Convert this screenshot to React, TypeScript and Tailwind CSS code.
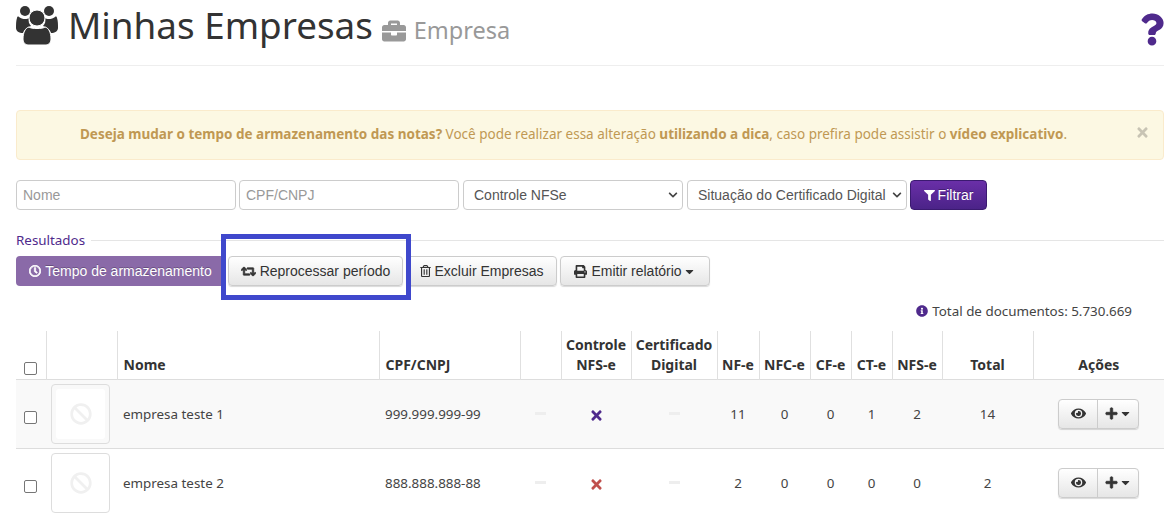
import { FaBriefcase, FaEye, FaPlus, FaPrint, FaQuestion, FaRetweet, FaTimes, FaFilter, FaInfoCircle, FaBan, FaRegClock, FaCaretDown, FaRegTrashAlt, FaChevronDown } from "react-icons/fa";

const noto = "font-['Noto_Sans',sans-serif]";
const arial = "font-['Liberation_Sans',Arial,sans-serif]";

const UsersIcon = () => (
    <svg viewBox="0 0 42 40" className="w-[42px] h-[40px] fill-[#333333]">
        <circle cx="9" cy="6" r="5" />
        <circle cx="33" cy="6" r="5" />
        <path d="M1 13c0-1 1-2 2-1 2 2 8 3 10 1-1 3 0 6 2 8-4 1-7 4-8 7-4 0-7-2-7-5 0-4 0-7 1-10z" />
        <path d="M41 13c0-1-1-2-2-1-2 2-8 3-10 1 1 3 0 6-2 8 4 1 7 4 8 7 4 0 7-2 7-5 0-4 0-7-1-10z" />
        <circle cx="21" cy="13" r="8" stroke="#ffffff" strokeWidth="1" />
        <path d="M13 22c2 2 14 2 16 0 4 1 6 6 6 12 0 3-2 6-5 6H12c-3 0-5-3-5-6 0-6 2-11 6-12z" stroke="#ffffff" strokeWidth="1" />
    </svg>
);

const headers = [
    { label: "", w: "w-[30px]" },
    { label: "", w: "w-[71px]" },
    { label: "Nome", w: "w-[262px]", left: true },
    { label: "CPF/CNPJ", w: "w-[141px]", left: true },
    { label: "", w: "w-[41px]" },
    { label: "Controle NFS-e", w: "w-[70px]" },
    { label: "Certificado Digital", w: "w-[86px]" },
    { label: "NF-e", w: "w-[42px]" },
    { label: "NFC-e", w: "w-[51px]" },
    { label: "CF-e", w: "w-[41px]" },
    { label: "CT-e", w: "w-[41px]" },
    { label: "NFS-e", w: "w-[50px]" },
    { label: "Total", w: "w-[91px]" },
    { label: "Ações", w: "w-[131px]" },
];

const rows = [
    { nome: "empresa teste 1", cnpj: "999.999.999-99", x: "text-[#4f2a8c]", vals: ["11", "0", "0", "1", "2", "14"], bg: "bg-[#f9f9f9]" },
    { nome: "empresa teste 2", cnpj: "888.888.888-88", x: "text-[#c0504d]", vals: ["2", "0", "0", "0", "0", "2"], bg: "bg-white" },
];

const btn =
    "h-[30px] flex items-center justify-center gap-1 whitespace-nowrap rounded-[4px] border border-[#cccccc] shadow-[0_1px_1px_rgba(0,0,0,0.15)] bg-gradient-to-b from-white to-[#e6e6e6] text-[14px] text-[#333333]";

const Dash = () => <div className="mx-auto w-[11px] h-[3px] bg-[#eeeeee]" />;

const Check = () => (
    <div className="ml-[8px] w-[13px] h-[13px] rounded-[2px] border border-[#767676] bg-white" />
);

export default function App() {
    return (
        <div className={`${noto} w-[1167px] h-[516px] overflow-hidden bg-white pl-4 pr-[3px] text-[#333333]`}>
            {/* titulo */}
            <div className="h-[66px] border-b border-[#eeeeee] flex items-start">
                <div className="mt-[5px]"><UsersIcon /></div>
                <h1 className="ml-[10px] text-[36.8px] leading-[50px] text-[#333333] whitespace-nowrap">Minhas Empresas</h1>
                <div className="ml-[8px] mt-[14px] flex items-center gap-[7px] text-[#999999] text-[23.5px] leading-[33px]">
                    <FaBriefcase className="w-[26px] h-[24px]" />
                    <span>Empresa</span>
                </div>
                <FaQuestion className="ml-auto mt-[13px] w-[24px] h-[33px] text-[#4f2a8c]" />
            </div>

            {/* alerta */}
            <div className="relative mt-[44px] h-[50px] rounded-[4px] border border-[#faebcc] bg-[#fcf8e3] flex items-center justify-center pr-[33px] pb-[1px] text-[13.5px] text-[#c09853]">
                <p>
                    <b>Deseja mudar o tempo de armazenamento das notas?</b> Você pode realizar essa alteração <b>utilizando a dica</b>, caso prefira pode assistir o <b>vídeo explicativo</b>.
                </p>
                <FaTimes className="absolute right-[13px] top-[14px] w-[15px] h-[15px] text-[#c8c4b4]" />
            </div>

            {/* filtros */}
            <div className={`${arial} mt-[20px] flex items-center gap-[3px] text-[14px]`}>
                <div className="w-[220px] h-[30px] rounded-[4px] border border-[#cccccc] px-[6px] leading-[28px] text-[#999999]">Nome</div>
                <div className="w-[220px] h-[30px] rounded-[4px] border border-[#cccccc] px-[6px] leading-[28px] text-[#999999]">CPF/CNPJ</div>
                <div className="ml-[1px] w-[220px] h-[30px] rounded-[4px] border border-[#cccccc] pl-[10px] pr-[4px] flex items-center justify-between text-[#555555]">
                    <span>Controle NFSe</span>
                    <FaChevronDown className="w-[10px] h-[10px] text-[#444444]" />
                </div>
                <div className="ml-[1px] w-[220px] h-[30px] rounded-[4px] border border-[#cccccc] pl-[10px] pr-[4px] flex items-center justify-between text-[#555555]">
                    <span className="whitespace-nowrap">Situação do Certificado Digital</span>
                    <FaChevronDown className="w-[10px] h-[10px] text-[#444444]" />
                </div>
                <div className="w-[77px] h-[30px] rounded-[4px] border border-[#3b1a70] bg-gradient-to-b from-[#6a2fa8] to-[#4b2388] text-white [text-shadow:0_-1px_0_rgba(0,0,0,0.3)] flex items-center justify-center gap-[3px]">
                    <FaFilter className="w-[11px] h-[11px]" />
                    <span>Filtrar</span>
                </div>
            </div>

            {/* resultados */}
            <div className="mt-[21px] flex items-center gap-[6px]">
                <span className="text-[13.4px] leading-[18px] text-[#4f2a8c]">Resultados</span>
                <div className="flex-1 h-px bg-[#e5e5e5]" />
            </div>
            <div className={`${arial} relative mt-[7px] flex items-center`}>
                <div className="w-[209px] h-[30px] rounded-l-[4px] bg-[#8a6aa8] text-white [text-shadow:0_-1px_0_rgba(0,0,0,0.25)] text-[14px] flex items-center justify-center gap-[4px] whitespace-nowrap">
                    <FaRegClock className="w-[12px] h-[12px]" stroke="currentColor" strokeWidth={30} />
                    <span>Tempo de armazenamento</span>
                </div>
                <div className={`${btn} w-[175px] ml-[3px]`}>
                    <FaRetweet className="w-[15px] h-[13px]" stroke="currentColor" strokeWidth={30} />
                    <span>Reprocessar período</span>
                </div>
                <div className={`${btn} w-[151px] ml-[3px]`}>
                    <FaRegTrashAlt className="w-[11px] h-[12px]" />
                    <span>Excluir Empresas</span>
                </div>
                <div className={`${btn} w-[150px] ml-[3px]`}>
                    <FaPrint className="w-[13px] h-[13px]" />
                    <span>Emitir relatório</span>
                    <FaCaretDown className="w-[13px] h-[13px] -ml-[3px]" />
                </div>
                {/* destaque azul */}
                <div className="absolute left-[205px] top-[-22px] w-[190px] h-[66px] border-[5px] border-[#3f48cc]" />
            </div>

            <div className="mt-[15px] mr-[32px] flex items-center justify-end gap-[4px] text-[13.4px] leading-[20px] text-[#444444]">
                <FaInfoCircle className="w-[12px] h-[12px] text-[#4f2a8c]" />
                <span>Total de documentos: 5.730.669</span>
            </div>

            {/* tabela */}
            <table className="mt-[10px] w-[1148px] table-fixed border-collapse text-[13.4px]">
                <thead>
                    <tr className="h-[48px] border-b border-[#dddddd]">
                        {headers.map((h, i) => (
                            <th
                                key={i}
                                className={`${h.w} ${h.left ? "text-left pl-[6px]" : "text-center"} ${i > 0 ? "border-l border-[#e0e0e0]" : ""} align-bottom pb-[4px] text-[14px] font-bold leading-[20px] text-[#333333]`}
                            >
                                {i === 0 ? <Check /> : h.label}
                            </th>
                        ))}
                    </tr>
                </thead>
                <tbody>
                    {rows.map((r) => (
                        <tr key={r.nome} className={`h-[69px] border-b border-[#dddddd] last:border-b-0 ${r.bg}`}>
                            <td><div className="mt-[8px]"><Check /></div></td>
                            <td>
                                <div className="ml-[5px] w-[59px] h-[60px] rounded-[4px] border border-[#dddddd] p-[4px]">
                                    <div className="w-full h-full rounded-[3px] bg-white flex items-center justify-center">
                                        <FaBan className="w-[22px] h-[22px] text-[#f0f0f0]" />
                                    </div>
                                </div>
                            </td>
                            <td className="pl-[6px] pt-[1px] text-[#444444]">{r.nome}</td>
                            <td className="pl-[6px] pt-[1px] text-[#444444]">{r.cnpj}</td>
                            <td><Dash /></td>
                            <td className="text-center">
                                <FaTimes className={`mx-auto mt-[4px] w-[15px] h-[15px] ${r.x}`} />
                            </td>
                            <td><Dash /></td>
                            {r.vals.map((v, i) => (
                                <td key={i} className="pt-[1px] text-center text-[#444444]">{v}</td>
                            ))}
                            <td>
                                <div className="mx-auto w-[81px] h-[30px] flex rounded-[4px] border border-[#cccccc] shadow-[0_1px_1px_rgba(0,0,0,0.15)] bg-gradient-to-b from-white to-[#e6e6e6]">
                                    <div className="w-[39px] flex items-center justify-center border-r border-[#cccccc]">
                                        <FaEye className="w-[15px] h-[15px] text-[#333333]" />
                                    </div>
                                    <div className="flex-1 flex items-center justify-center gap-[1px]">
                                        <FaPlus className="w-[13px] h-[13px] text-[#333333]" stroke="currentColor" strokeWidth={30} />
                                        <FaCaretDown className="w-[13px] h-[13px] text-[#333333]" />
                                    </div>
                                </div>
                            </td>
                        </tr>
                    ))}
                </tbody>
            </table>
        </div>
    );
}
